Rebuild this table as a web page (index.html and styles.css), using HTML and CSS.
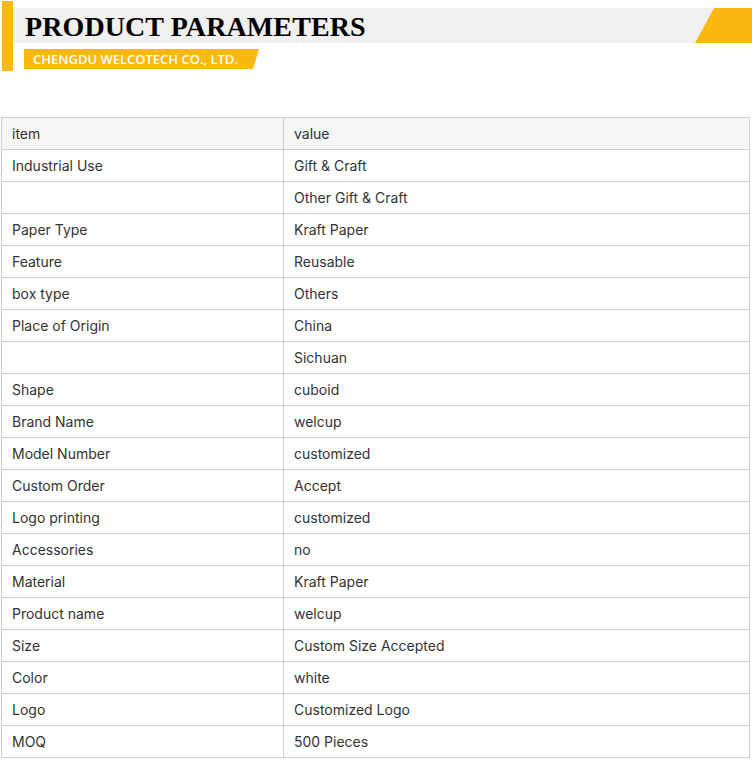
FILE: index.html
```html
<!DOCTYPE html>
<html>
<head>
<meta charset="utf-8">
<link rel="stylesheet" href="styles.css">
</head>
<body>
<div class="header">
  <div class="bar"></div>
  <div class="head-main">
    <div class="band">
      <h1 class="title">PRODUCT PARAMETERS</h1>
      <div class="band-accent"></div>
    </div>
    <div class="sub">CHENGDU WELCOTECH CO., LTD.</div>
  </div>
</div>
<table class="params">
  <tr class="head"><td>item</td><td>value</td></tr>
  <tr><td>Industrial Use</td><td>Gift &amp; Craft</td></tr>
  <tr><td></td><td>Other Gift &amp; Craft</td></tr>
  <tr><td>Paper Type</td><td>Kraft Paper</td></tr>
  <tr><td>Feature</td><td>Reusable</td></tr>
  <tr><td>box type</td><td>Others</td></tr>
  <tr><td>Place of Origin</td><td>China</td></tr>
  <tr><td></td><td>Sichuan</td></tr>
  <tr><td>Shape</td><td>cuboid</td></tr>
  <tr><td>Brand Name</td><td>welcup</td></tr>
  <tr><td>Model Number</td><td>customized</td></tr>
  <tr><td>Custom Order</td><td>Accept</td></tr>
  <tr><td>Logo printing</td><td>customized</td></tr>
  <tr><td>Accessories</td><td>no</td></tr>
  <tr><td>Material</td><td>Kraft Paper</td></tr>
  <tr><td>Product name</td><td>welcup</td></tr>
  <tr><td>Size</td><td>Custom Size Accepted</td></tr>
  <tr><td>Color</td><td>white</td></tr>
  <tr><td>Logo</td><td>Customized Logo</td></tr>
  <tr><td>MOQ</td><td>500 Pieces</td></tr>
</table>
</body>
</html>
```

FILE: styles.css
```css
html, body {
  margin: 0;
  padding: 0;
  background: #fff;
}
.header {
  display: flex;
  align-items: flex-start;
  height: 71px;
}
.bar {
  width: 11px;
  height: 70px;
  margin-top: 1px;
  margin-left: 2px;
  background: #fbb812;
  flex: none;
}
.head-main {
  flex: 1;
  display: flex;
  flex-direction: column;
}
.band {
  margin-top: 8px;
  height: 35px;
  background: #f0f0f0;
  display: flex;
  align-items: center;
  justify-content: space-between;
}
.title {
  margin: 2px 0 0 12px;
  font-family: "Liberation Serif", serif;
  font-weight: bold;
  font-size: 28px;
  letter-spacing: 0.1px;
  color: #000;
  line-height: 35px;
}
.band-accent {
  width: 57px;
  height: 35px;
  background: #fbb812;
  clip-path: polygon(19px 0, 100% 0, 100% 100%, 0 100%);
}
.sub {
  margin-top: 6px;
  margin-left: 11px;
  width: 235px;
  height: 20px;
  background: #fbb812;
  clip-path: polygon(0 0, 100% 0, calc(100% - 6px) 100%, 0 100%);
  color: #fff;
  font-family: "Open Sans", sans-serif;
  font-weight: 600;
  font-size: 13px;
  line-height: 20px;
  padding-left: 9px;
  box-sizing: border-box;
  white-space: nowrap;
}
.params {
  margin: 46px 0 0 1px;
  width: 749px;
  border-collapse: collapse;
  font-family: Inter, "Liberation Sans", sans-serif;
  font-size: 14px;
  color: #333;
}
.params td {
  border: 1px solid #cfcfcf;
  height: 32px;
  padding: 0 10px;
  box-sizing: border-box;
  vertical-align: middle;
}
.params td:first-child {
  width: 282px;
}
.params .head td {
  background: #f5f6f7;
}
```
